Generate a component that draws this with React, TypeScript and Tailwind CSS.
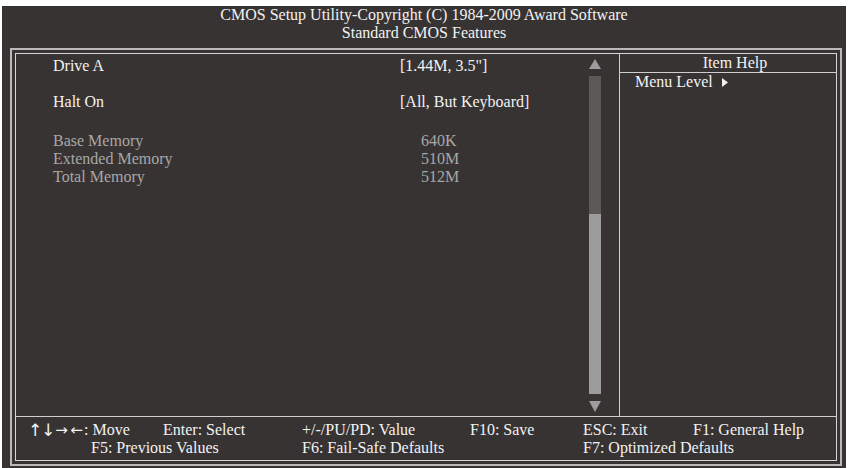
import React from "react";

const F = { fontFamily: '"Liberation Serif", "Times New Roman", serif' };
const A = { fontFamily: '"DejaVu Sans", sans-serif' };

export default function App() {
  return (
    <div className="w-[848px] h-[468px] bg-white overflow-hidden" style={F}>
      <div className="ml-[2px] mt-[6px] w-[844px] h-[462px] bg-[#373332] text-[16px] leading-[18px] text-[#f2f2f2]">
        <div className="text-center">
          <div>CMOS Setup Utility-Copyright (C) 1984-2009 Award Software</div>
          <div>Standard CMOS Features</div>
        </div>
        <div className="ml-[8px] mt-[6px] w-[832px] h-[418px] border-2 border-[#b9b9b9] p-[3px]">
          <div className="h-full border border-[#d6d6d6] flex flex-col">
            <div className="h-[363px] flex border-b border-[#cfcfcf]">
              <div className="w-[603px] flex">
                <div className="w-[573px] pt-[3px] relative">
                  <div className="flex">
                    <span className="ml-[37px] w-[347px]">Drive A</span>
                    <span>[1.44M, 3.5"]</span>
                  </div>
                  <div className="flex mt-[18px]">
                    <span className="ml-[37px] w-[347px]">Halt On</span>
                    <span>[All, But Keyboard]</span>
                  </div>
                  <div className="mt-[21px] text-[#a7a7a7]">
                    <div className="flex">
                      <span className="ml-[37px] w-[368px]">Base Memory</span>
                      <span>640K</span>
                    </div>
                    <div className="flex">
                      <span className="ml-[37px] w-[368px]">Extended Memory</span>
                      <span>510M</span>
                    </div>
                    <div className="flex">
                      <span className="ml-[37px] w-[368px]">Total Memory</span>
                      <span>512M</span>
                    </div>
                  </div>
                </div>
                <div className="w-[12px] pt-[5px] flex flex-col items-center">
                  <svg width="12" height="10" viewBox="0 0 12 10">
                    <polygon points="6,0 12,10 0,10" fill="#9c9c9c" />
                  </svg>
                  <div className="mt-[7px] w-[12px] h-[138px] bg-[#5b5858]" />
                  <div className="w-[12px] h-[180px] bg-[#9c9c9c]" />
                  <svg className="mt-[7px]" width="12" height="11" viewBox="0 0 12 11">
                    <polygon points="0,0 12,0 6,11" fill="#9c9c9c" />
                  </svg>
                </div>
              </div>
              <div className="flex-1 border-l border-[#cfcfcf]">
                <div className="h-[19px] border-b border-[#cfcfcf] text-center pl-[14px]">Item Help</div>
                <div className="flex items-center pl-[15px]">
                  <span>Menu Level</span>
                  <svg className="ml-[9px]" width="6" height="9" viewBox="0 0 6 9">
                    <polygon points="0,0 6,4.5 0,9" fill="#f2f2f2" />
                  </svg>
                </div>
              </div>
            </div>
            <div className="pt-[4px]">
              <div className="flex pl-[12px]">
                <span className="w-[135px] flex">
                  <span className="inline-block w-[13px] text-center text-[17px] leading-[18px]" style={A}>↑</span>
                  <span className="inline-block w-[13px] text-center text-[17px] leading-[18px]" style={A}>↓</span>
                  <span className="inline-block w-[15px] text-center text-[15px] leading-[18px]" style={A}>→</span>
                  <span className="inline-block w-[15px] text-center text-[15px] leading-[18px]" style={A}>←</span>
                  <span>: Move</span>
                </span>
                <span className="w-[139px]">Enter: Select</span>
                <span className="w-[168px]">+/-/PU/PD: Value</span>
                <span className="w-[113px]">F10: Save</span>
                <span className="w-[110px]">ESC: Exit</span>
                <span>F1: General Help</span>
              </div>
              <div className="flex pl-[75px]">
                <span className="w-[211px]">F5: Previous Values</span>
                <span className="w-[281px]">F6: Fail-Safe Defaults</span>
                <span>F7: Optimized Defaults</span>
              </div>
            </div>
          </div>
        </div>
      </div>
    </div>
  );
}
